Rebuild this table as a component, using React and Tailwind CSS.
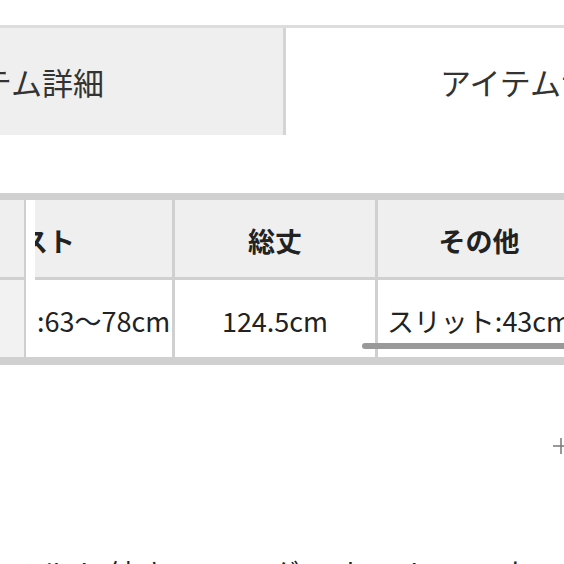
import React from 'react';

const font = { fontFamily: '"Noto Sans CJK JP", "Noto Sans", sans-serif' };

const App = () => {
	return (
		<div className="w-[564px] h-[564px] overflow-hidden bg-white text-[#222]" style={font}>
			{/* tabs */}
			<div className="pt-[25px]">
				<div className="flex border-t-[3px] border-[#dddddd]">
					<div className="w-[283px] h-[107px] shrink-0 bg-[#efefef] flex items-center overflow-hidden">
						<span className="ml-[-79px] whitespace-nowrap text-[31px] leading-none text-[#333]">
							アイテム詳細
						</span>
					</div>
					<div className="flex-1 h-[107px] border-l-[3px] border-[#d4d4d4] flex items-center pl-[154px] whitespace-nowrap">
						<span className="text-[31px] leading-none text-[#333]">アイテムサイズ</span>
					</div>
				</div>
			</div>

			{/* size table */}
			<div className="relative mt-[58px] w-[800px] border-t-[7px] border-b-[8px] border-[#d0d0d0] flex">
				<div className="w-[26px] shrink-0 flex flex-col border-r-2 border-[#cfcfcf]">
					<div className="h-[80px] bg-[#efefef] border-b-[3px] border-[#d0d0d0]" />
					<div className="h-[77px] bg-[#f2f2f2]" />
				</div>
				<div className="w-[9px] shrink-0 bg-white" />
				<div className="w-[140px] shrink-0 flex flex-col border-r-[3px] border-[#d0d0d0]">
					<div className="h-[80px] bg-[#efefef] border-b-[3px] border-[#d0d0d0] flex items-center justify-end pr-[97px] pt-1 overflow-hidden whitespace-nowrap">
						<span className="text-[27px] font-bold leading-none">ウエスト</span>
					</div>
					<div className="h-[77px] bg-white flex items-center pt-1 overflow-hidden whitespace-nowrap">
						<span className="ml-[-106px] text-[27px] leading-none">ウエスト:63〜78cm</span>
					</div>
				</div>
				<div className="w-[203px] shrink-0 flex flex-col border-r-[3px] border-[#d0d0d0]">
					<div className="h-[80px] bg-[#efefef] border-b-[3px] border-[#d0d0d0] flex items-center justify-center pt-1">
						<span className="text-[27px] font-bold leading-none">総丈</span>
					</div>
					<div className="h-[77px] bg-white flex items-center justify-center pt-1">
						<span className="text-[27px] leading-none">124.5cm</span>
					</div>
				</div>
				<div className="w-[202px] shrink-0 flex flex-col">
					<div className="h-[80px] bg-[#efefef] border-b-[3px] border-[#d0d0d0] flex items-center justify-center pt-1">
						<span className="text-[27px] font-bold leading-none">その他</span>
					</div>
					<div className="h-[77px] bg-white flex items-center justify-center pt-1 whitespace-nowrap">
						<span className="text-[27px] leading-none">スリット:43cm</span>
					</div>
				</div>
				<div className="flex-1 flex flex-col">
					<div className="h-[80px] bg-[#efefef] border-b-[3px] border-[#d0d0d0]" />
					<div className="h-[77px] bg-white" />
				</div>
				{/* horizontal scrollbar thumb */}
				<div className="absolute left-[362px] top-[143px] w-[260px] h-[6px] rounded-full bg-[#999999]" />
			</div>

			{/* accordion toggle */}
			<div className="flex justify-end mt-[73px] mr-[-5px]">
				<svg width="16" height="16" viewBox="0 0 16 16" className="text-[#777]">
					<path d="M8 0v16M0 8h16" stroke="currentColor" strokeWidth="1.5" fill="none" />
				</svg>
			</div>

			{/* description (cut off) */}
			<p className="mt-[105px] ml-[8px] whitespace-nowrap text-[27px] leading-none tracking-[6px]">
				ベルト付きのロングスカートで、ウエストはゴム仕様です。
			</p>
		</div>
	);
};

export default App;
